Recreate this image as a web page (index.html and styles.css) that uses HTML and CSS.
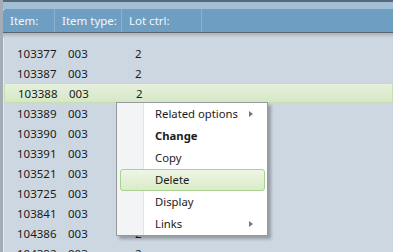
FILE: index.html
```html
<!DOCTYPE html>
<html lang="en">
<head>
    <meta charset="UTF-8">
    <title>Items</title>
    <link rel="stylesheet" href="styles.css">
</head>
<body>
    <div class="window">
        <div class="top-strip"></div>
        <div class="header">
            <div class="col c1">Item:</div>
            <div class="col c2">Item type:</div>
            <div class="col c3">Lot ctrl:</div>
            <div class="col c4"></div>
        </div>
        <div class="shade"></div>
        <div class="list">
            <div class="row"><span class="c1">103377</span><span class="c2">003</span><span class="c3">2</span></div>
            <div class="row"><span class="c1">103387</span><span class="c2">003</span><span class="c3">2</span></div>
            <div class="row selected"><span class="c1">103388</span><span class="c2">003</span><span class="c3">2</span></div>
            <div class="row"><span class="c1">103389</span><span class="c2">003</span><span class="c3">2</span></div>
            <div class="row"><span class="c1">103390</span><span class="c2">003</span><span class="c3">2</span></div>
            <div class="row"><span class="c1">103391</span><span class="c2">003</span><span class="c3">2</span></div>
            <div class="row"><span class="c1">103521</span><span class="c2">003</span><span class="c3">2</span></div>
            <div class="row"><span class="c1">103725</span><span class="c2">003</span><span class="c3">2</span></div>
            <div class="row"><span class="c1">103841</span><span class="c2">003</span><span class="c3">2</span></div>
            <div class="row"><span class="c1">104386</span><span class="c2">003</span><span class="c3">2</span></div>
            <div class="row"><span class="c1">104392</span><span class="c2">003</span><span class="c3">2</span></div>
        </div>

        <div class="menu">
            <div class="item">Related options<span class="arrow"></span></div>
            <div class="item bold">Change</div>
            <div class="item">Copy</div>
            <div class="item hover">Delete</div>
            <div class="item">Display</div>
            <div class="item">Links<span class="arrow"></span></div>
        </div>
    </div>
</body>
</html>
```

FILE: styles.css
```css
body {
    margin: 0;
    font-family: 'Noto Sans', 'Open Sans', sans-serif;
    font-size: 11.5px;
    color: #1b1b1b;
    background-color: #cdd7e1;
    overflow: hidden;
}
.window {
    position: relative;
    height: 252px;
    border-left: 3px solid #a4adb6;
    box-shadow: inset 1px 0 0 #e4e9ee;
}
.top-strip {
    height: 7px;
    border-top: 2px solid #55697a;
    background-color: #a2bfd5;
}
.header {
    display: flex;
    height: 23px;
    background-color: #6e9ec2;
    border-bottom: 1px solid #5e6266;
    border-top-left-radius: 3px;
    color: #f4f7fa;
}
.header .col {
    display: flex;
    align-items: center;
    border-right: 1px solid #8db2cd;
    padding-left: 7px;
}
.header .c1 { width: 44px; }
.header .c2 { width: 59px; }
.header .c3 { width: 72px; }
.header .c4 { flex: 1; border-right: none; }
.shade {
    height: 5px;
    background: linear-gradient(#a9b3bd, #cdd7e1);
}
.list {
    padding-top: 5px;
}
.row {
    display: flex;
    align-items: center;
    height: 20px;
    box-sizing: border-box;
    padding-left: 14px;
}
.row .c1 { width: 51px; }
.row .c2 { width: 67px; }
.row .c3 { width: 20px; }
.selected {
    margin-left: 1px;
    border: 1px solid #c6deb2;
    border-radius: 2px;
    padding-left: 13px;
    background: linear-gradient(#e6f0dc, #d6e8c6);
}
.menu {
    position: absolute;
    left: 113px;
    top: 102px;
    width: 148px;
    background: linear-gradient(to right, #f3f4f5 26px, #e2e3e4 26px, #e2e3e4 27px, #ffffff 27px);
    border: 1px solid #979a9d;
    box-shadow: 3px 3px 3px rgba(0, 0, 0, 0.28);
    padding: 0 1px;
}
.item {
    position: relative;
    height: 22px;
    line-height: 22px;
    padding-left: 37px;
    font-size: 11.3px;
}
.bold {
    font-weight: bold;
}
.hover {
    border: 1px solid #a9d18f;
    border-radius: 3px;
    line-height: 20px;
    height: 22px;
    box-sizing: border-box;
    padding-left: 34px;
    margin: 0 1px 0 2px;
    background: linear-gradient(#eef6e6, #d9ecc6);
}
.arrow {
    position: absolute;
    left: 131px;
    top: 8px;
    border-left: 4px solid #777;
    border-top: 3px solid transparent;
    border-bottom: 3px solid transparent;
}
```
